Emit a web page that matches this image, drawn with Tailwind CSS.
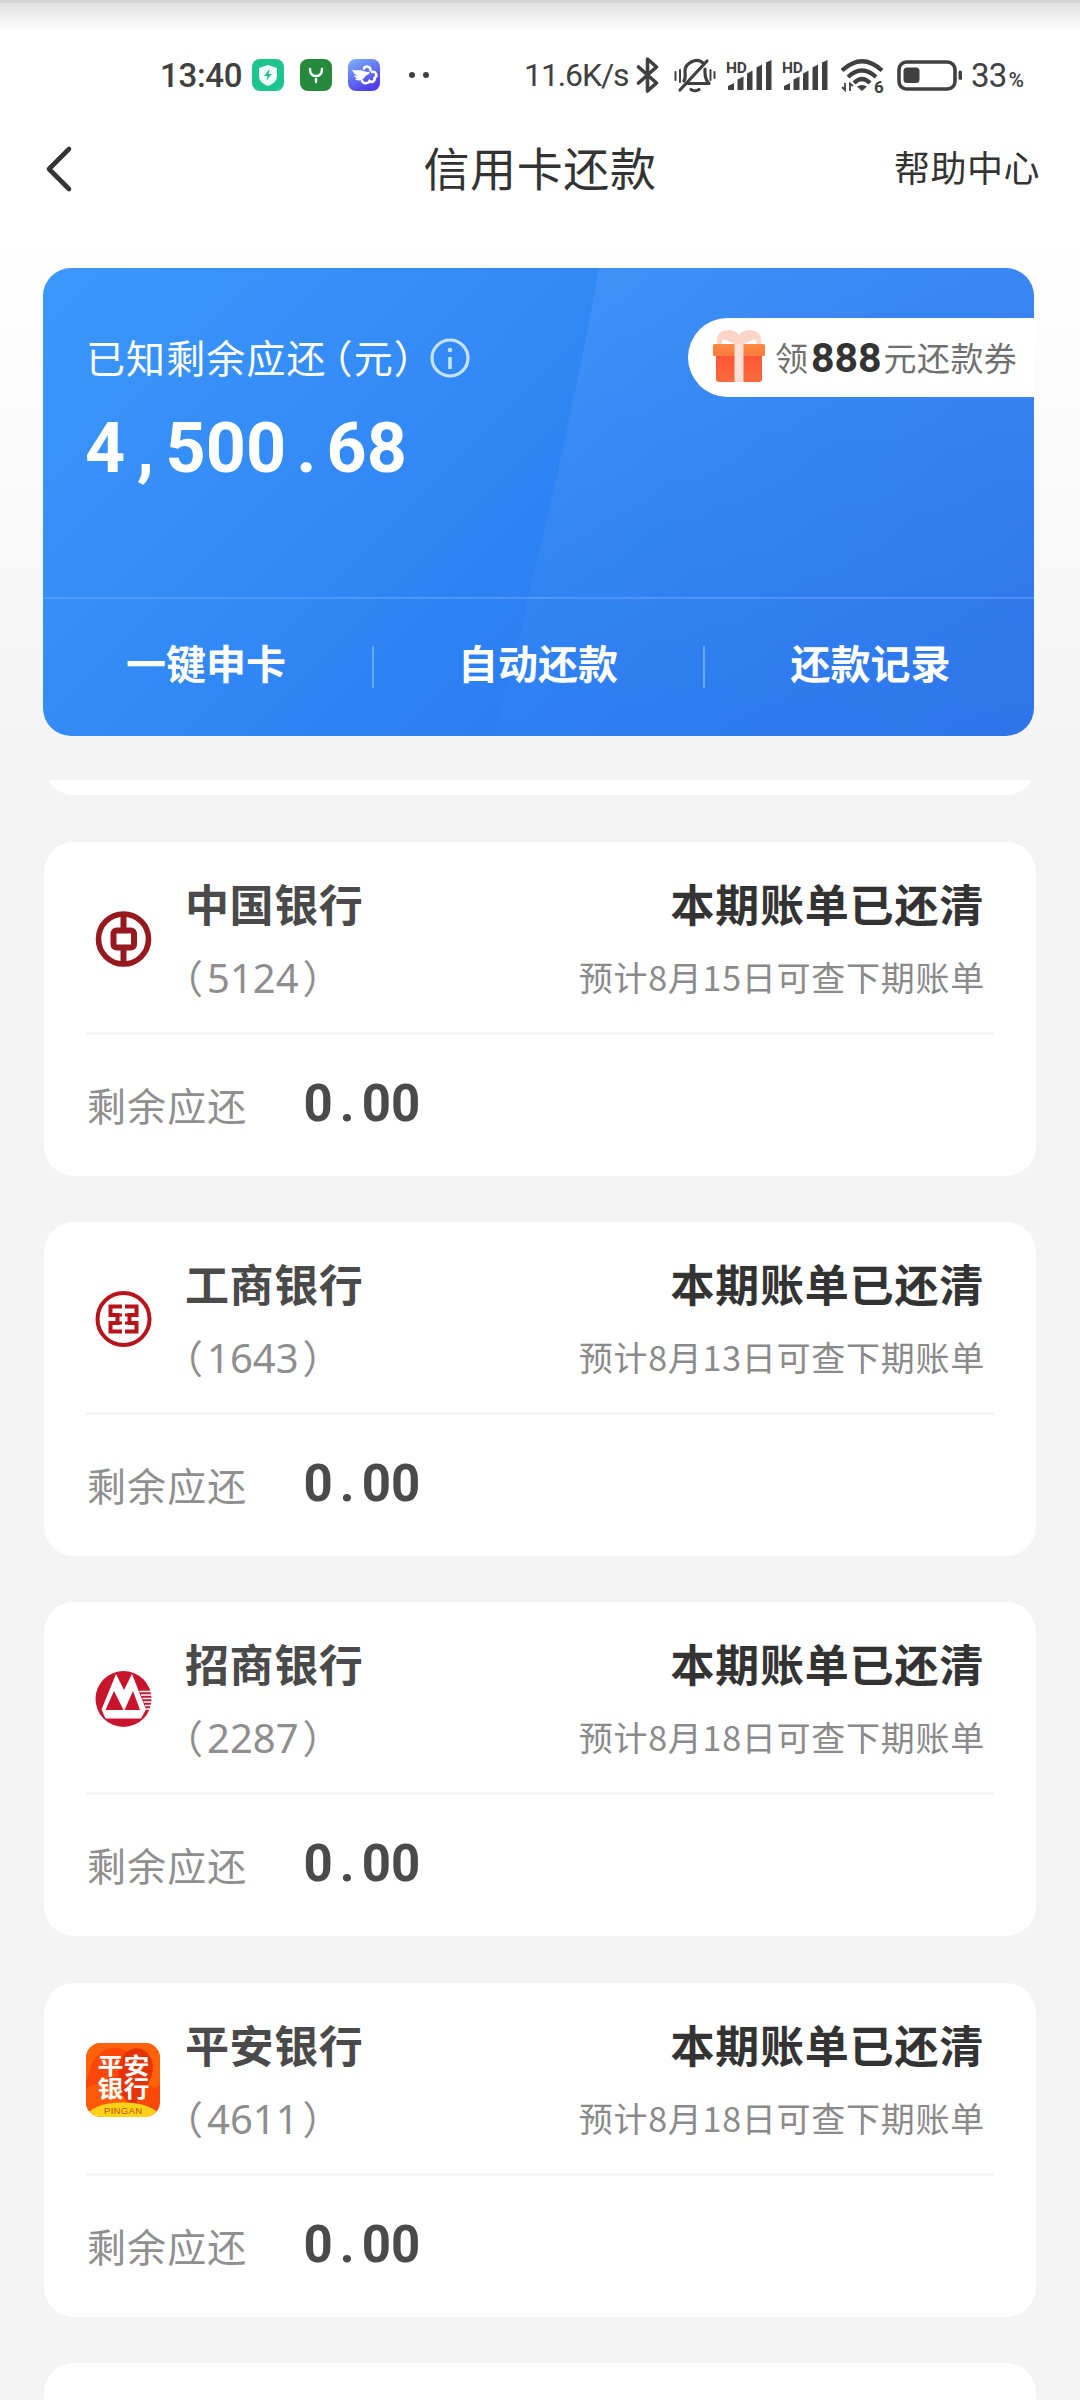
<!DOCTYPE html>
<html lang="zh-CN">
<head>
<meta charset="utf-8">
<title>信用卡还款</title>
<script src="https://cdn.jsdelivr.net/npm/@tailwindcss/browser@4"></script>
</head>
<body class="bg-[#f4f4f4]">
<div class="relative flex h-[2400px] w-[1080px] flex-col overflow-hidden bg-[#f4f4f4] font-['Noto_Sans_CJK_SC',sans-serif] text-[#333]">

  <!-- Top area: status bar, title bar, summary card -->
  <div class="h-[780px] shrink-0 bg-linear-to-b from-white from-30% to-[#f4f4f4] to-95%">
    <div class="h-[3px] bg-[#d6d6d6]"></div>
    <div class="h-[29px] bg-linear-to-b from-[#e2e2e2] to-white"></div>

    <!-- Status bar -->
    <div class="flex h-[86px] items-center font-['Roboto',sans-serif] text-[33px] font-medium leading-none text-[#404040] *:shrink-0">
      <span class="ml-[160px] w-[92px] tracking-[-0.3px]">13:40</span>
      <svg class="size-8" viewBox="0 0 32 32"><rect width="32" height="32" rx="8" fill="#1ec48d"/><path d="M16 6l9 3v8c0 5-4 8-9 10-5-2-9-5-9-10V9z" fill="#f1fffa"/><path d="M17.500 10l-5.500 7h3.500l-1 5 5-7h-3z" fill="#1ec48d"/></svg>
      <svg class="ml-4 size-8" viewBox="0 0 32 32"><rect width="32" height="32" rx="8" fill="#258a3c"/><path d="M10 10q0 7 6 7t6-7M16 20v3" fill="none" stroke="#fff" stroke-width="2.400" stroke-linecap="round"/></svg>
      <svg class="ml-4 size-8" viewBox="0 0 32 32"><defs><linearGradient id="wing" x1="0" y1="0" x2=".5" y2="1"><stop stop-color="#79b4fb"/><stop offset="1" stop-color="#5140ea"/></linearGradient></defs><rect width="32" height="32" rx="8" fill="url(#wing)"/><path d="M3 10.500C8 12 10 10.500 14 11.500c3 .8 5 2 8 1-1 3-2 3-4 4-2 3-4 5-7 5-2 0-4-1-4-2h3.500c-2 0-4-1.500-4.500-3h4c-3-.5-5-3-6-6z" fill="#fff"/><path d="M16 9.500c1-3 6.500-2.500 6.500 1.500M24 13c4-1 6 4 2.500 6 1 3-3 5-5 3-1.500 3-6 3-7.500 0" fill="none" stroke="#fff" stroke-width="2.500" stroke-linecap="round"/></svg>
      <span class="ml-[29px] size-1.5 rounded-full bg-[#404040]"></span>
      <span class="ml-2 size-1.5 rounded-full bg-[#404040]"></span>
      <span class="ml-[95px] w-[112px] whitespace-nowrap text-[32px] font-normal tracking-[-1.1px]">11.6K/s</span>
      <!-- Bluetooth -->
      <svg class="h-9 w-6" viewBox="0 0 24 36" fill="none" stroke="#404040" stroke-width="3.600" stroke-linejoin="round" stroke-linecap="round"><path d="M2.500 10l18 16-9 8V2l9 8-18 16"/></svg>
      <!-- Muted bell -->
      <svg class="ml-[14px] h-9 w-[42px]" viewBox="0 0 42 36" fill="none" stroke="#404040" stroke-width="3.200" stroke-linecap="round"><path d="M10 24c2-3 1-6 1-10 0-8 12-14 18-8M31 12c0 7 0 10 4 14.500H14" stroke-linejoin="round"/><path d="M33 4L6 33"/><path d="M17 32.500q4 2.500 8 0"/><path d="M1.500 15v8M6 13v12M36.500 13v10M40.500 15v6" stroke-width="2"/></svg>
      <!-- Cellular signals -->
      <svg class="ml-[10px] h-9 w-[46px]" viewBox="0 0 46 36" fill="#404040"><text x="0" y="15.500" font-size="15.500" font-weight="700" letter-spacing="-.3">HD</text><path d="M2 33v-4l6-3v7zM11.500 33V22.500l6-3V33zM21 33V16.500l5.500-3V33zM30.500 33V10.500l5.500-3V33zM40 33V5.500l5.500-2.500V33z"/></svg>
      <svg class="ml-[10px] h-9 w-[46px]" viewBox="0 0 46 36" fill="#404040"><text x="0" y="15.500" font-size="15.500" font-weight="700" letter-spacing="-.3">HD</text><path d="M2 33v-4l6-3v7zM11.500 33V22.500l6-3V33zM21 33V16.500l5.500-3V33zM30.500 33V10.500l5.500-3V33zM40 33V5.500l5.500-2.500V33z"/></svg>
      <!-- Wi-Fi 6 -->
      <svg class="ml-[13px] h-9 w-11" viewBox="0 0 44 36" fill="none" stroke="#404040" stroke-width="4.200"><path d="M1 13.500Q21 -5 41 13.500M7 20Q21 7 35 20M13 26Q21 18 29 26" /><path d="M21 34l-5-4.500q5-3 10 0z" fill="#404040" stroke="none"/><path d="M4 26v7L1 30M9 34v-7.500l3 2.500" stroke-width="1.800"/><text x="33" y="35.500" font-size="17" font-weight="700" fill="#404040" stroke="none">6</text></svg>
      <!-- Battery -->
      <svg class="ml-3 h-9 w-[66px]" viewBox="0 0 66 36"><rect x="2" y="5" width="56" height="27" rx="7.500" fill="none" stroke="#404040" stroke-width="3.600"/><rect x="6.500" y="10.500" width="16" height="15.500" rx="3.500" fill="#404040"/><rect x="61.500" y="13.500" width="3.500" height="9.500" rx="1.700" fill="#404040"/></svg>
      <span class="ml-2 flex items-baseline font-normal tracking-[-0.8px]">33<span class="ml-[2px] text-[21px] font-medium tracking-normal">%</span></span>
    </div>

    <!-- Title bar -->
    <div class="grid h-[150px] grid-cols-[1fr_auto_1fr] items-center">
      <svg class="-mt-[49px] ml-[45px] h-[48px] w-7" viewBox="0 0 28 48" fill="none" stroke="#333" stroke-width="4.600" stroke-linecap="round" stroke-linejoin="round"><path d="M24 4L4 24l20 20"/></svg>
      <h1 class="-mt-[54px] text-[46px] leading-[60px] tracking-[0.6px]">信用卡还款</h1>
      <span class="-mt-[54px] mr-[40px] justify-self-end text-[36px] leading-[50px] tracking-[0.5px]">帮助中心</span>
    </div>

    <!-- Summary card -->
    <div class="relative ml-[43px] flex h-[468px] w-[991px] flex-col overflow-hidden rounded-[28px] bg-linear-[135deg,#3b98fa_0%,#348bf6_32%,#2b7ff3_60%,#2a72e9_100%] text-white">
      <svg class="absolute inset-0 size-full" viewBox="0 0 991 467" preserveAspectRatio="none"><defs><linearGradient id="sheen" x1="0" y1="0" x2="0" y2="1"><stop stop-color="#fff" stop-opacity=".07"/><stop offset="1" stop-color="#fff" stop-opacity=".015"/></linearGradient></defs><path d="M556 0Q520 200 451 467H991V0z" fill="url(#sheen)"/></svg>
      <div class="relative flex h-[139px] items-center justify-between pt-[38px] pl-[43px]">
        <div class="flex items-center text-[39px] leading-[56px]">
          <span class="-mt-[2px] tracking-[1.1px] whitespace-nowrap">已知剩余应还<span class="-ml-[13px]">（</span>元）</span>
          <svg class="-ml-[4px] mt-[2px] size-10" viewBox="0 0 40 40" fill="none" stroke="#c5e2ff" stroke-width="3.200"><circle cx="20" cy="20" r="18"/><path d="M20 19v12" stroke-width="3.600"/><circle cx="20" cy="12" r="2.300" fill="#c5e2ff" stroke="none"/></svg>
        </div>
        <div class="mt-[2px] flex h-[79px] w-[346px] items-center rounded-l-full bg-white pl-[24px] text-[33px] leading-[50px]">
          <svg class="-mt-[3px] h-[54px] w-[54px] shrink-0" viewBox="0 0 54 54"><defs><linearGradient id="box" x1="0" y1="0" x2="0" y2="1"><stop stop-color="#ff5634"/><stop offset="1" stop-color="#fb6a3c"/></linearGradient><linearGradient id="lid" x1="0" y1="0" x2="0" y2="1"><stop stop-color="#ff8a45"/><stop offset="1" stop-color="#fd7a3c"/></linearGradient></defs><path d="M5 15C2-1 22-2 27 6 32-2 52-1 49 15z" fill="#fbd5c8"/><path d="M9 15l2-5 7 3 5 2zM45 15l-2-5-7 3-5 2z" fill="#fff"/><path d="M4 27h46v23q0 3-3 3H7q-3 0-3-3z" fill="url(#box)"/><rect x="1" y="15" width="52" height="12" rx="1.500" fill="url(#lid)"/><path d="M22.500 15h9v38h-9z" fill="#fde0d6"/></svg>
          <span class="-mt-[2px] ml-[9px] text-[#707070]">领</span><span class="ml-[3px] font-['Roboto',sans-serif] text-[41px] font-bold text-[#333]">888</span><span class="-mt-[2px] ml-[2px] tracking-[0.4px] text-[#707070]">元还款券</span>
        </div>
      </div>
      <div class="relative mt-px flex h-[80px] items-center pl-[42px] font-['Roboto',sans-serif] text-[70px] leading-[80px] font-bold tracking-[0.2px]">
        <span>4</span><span class="w-10 text-center">,</span><span>500</span><span class="w-10 text-center">.</span><span>68</span>
      </div>
      <div class="relative mt-[109px] grid h-[139px] grid-cols-[329px_331px_331px] border-t-2 border-white/15 pt-[36px] text-[40px] leading-[54px] font-bold">
        <div class="pr-[3px] text-center">一键申卡</div>
        <div class="relative pl-px text-center before:absolute before:top-[11px] before:left-0 before:h-[42px] before:w-0.5 before:bg-white/30">自动还款</div>
        <div class="relative pl-[4px] text-center before:absolute before:top-[11px] before:left-0 before:h-[42px] before:w-0.5 before:bg-white/30">还款记录</div>
      </div>
    </div>
  </div>

  <!-- Bill list -->
  <div class="ml-[44px] flex h-[1620px] w-[992px] flex-col">
    <div class="h-[15px] shrink-0 overflow-hidden"><div class="-mt-[85px] h-[100px] rounded-[30px] bg-white"></div></div>
    <div id="bills" class="mt-[46.7px] flex flex-col gap-[46.3px]"></div>
    <div class="mt-[46px] h-[60px] shrink-0 rounded-t-[30px] bg-white"></div>
  </div>
</div>

<script>
const bills = [
  { name: '中国银行', no: '5124', day: 15, logo: `<g fill="none" stroke="#96191f"><circle cx="37.500" cy="37" r="25" stroke-width="5.600"/><rect x="27.500" y="28.500" width="20.500" height="17" rx="3" stroke-width="6"/><path d="M37.500 12v14M37.500 48v14" stroke-width="6"/></g>` },
  { name: '工商银行', no: '1643', day: 13, logo: `<g fill="none" stroke="#b8131b"><circle cx="37.500" cy="37" r="26" stroke-width="4"/><path d="M36 24.500H24.500V33h7v8h-7v8.500H36M39 24.500h11.500V33h-7v8h7v8.500H39" stroke-width="4"/><path d="M36 33h-3M39 33h3M36 41h-3M39 41h3" stroke-width="3"/></g>` },
  { name: '招商银行', no: '2287', day: 18, logo: `<circle cx="37.500" cy="37" r="28" fill="#c8152d"/><path d="M30 12L15.500 47.500 19.500 56.500H55L60 47.500 46 12 38 28z" fill="#fff"/><path d="M28 29L19.500 48H37.500zM47 29L38.500 48H54z" fill="#c8152d"/><path d="M53.500 29.500H66M55 33H66M56.500 36.500H66M57.500 40H66M59 43.500H65M60 47H64" stroke="#fff" stroke-width="1.500"/>` },
  { name: '平安银行', no: '4611', day: 18, logo: `<defs><clipPath id="tile"><rect width="74" height="74" rx="15"/></clipPath></defs><g clip-path="url(#tile)"><rect width="74" height="74" fill="#fb4708"/><path d="M0 0h74v40C68 52 60 40 50 20 44 4 20-4 6 20L0 40z" fill="#ff6208"/><path d="M34 18C44-2 62 4 66 18S60 46 48 62H30z" fill="#e63208"/><path d="M0 46q16-12 30 0t14 22H0z" fill="#ff5a06"/><ellipse cx="37" cy="74" rx="36" ry="14.500" fill="#ffd21a"/></g><g font-weight="700" fill="#fff" font-size="23" text-anchor="middle"><text transform="translate(37.500 31) scale(1.13 1)">平安</text><text transform="translate(37.500 53.500) scale(1.13 1)">银行</text></g><text x="18" y="71" font-family="Liberation Sans" font-size="9.500" fill="#c0500a" textLength="38">PINGAN</text>` },
];
document.getElementById('bills').innerHTML = bills.map(b => `
  <div class="h-[334px] shrink-0 rounded-[30px] bg-white px-[42px]">
    <div class="flex h-[193px] items-start border-b-3 border-[#f5f5f5] pr-[10px]">
      <svg class="mt-[60px] size-[74px]" viewBox="0 0 74 74">${b.logo}</svg>
      <div class="ml-[25px] flex flex-col">
        <div class="mt-[31px] text-[44px] leading-[60px] font-bold tracking-[0.6px] text-[#4a4a4a]">${b.name}</div>
        <div class="mt-[23px] text-[39px] leading-[40px] text-[#8e8e8e]"><span class="-ml-[21px]">（</span><span class="ml-[4px] font-['Noto_Sans',sans-serif] text-[40px]">${b.no}</span><span class="ml-[4px]">）</span></div>
      </div>
      <div class="ml-auto flex flex-col items-end">
        <div class="mt-[31px] text-[44px] leading-[60px] font-bold tracking-[0.8px]">本期账单已还清</div>
        <div class="-mr-px mt-[24px] text-[34px] leading-[40px] tracking-[0.75px] text-[#8a8a8a]">预计8月${b.day}日可查下期账单</div>
      </div>
    </div>
    <div class="flex h-[138px] items-center pl-px">
      <span class="text-[39px] leading-[56px] tracking-[1.1px] text-[#8f8f8f]">剩余应还</span>
      <span class="ml-[56px] flex font-['Roboto',sans-serif] text-[51px] leading-[56px] font-bold text-[#4a4a4a]">0<span class="w-[29px] text-center">.</span>00</span>
    </div>
  </div>`).join('');
</script>
</body>
</html>
